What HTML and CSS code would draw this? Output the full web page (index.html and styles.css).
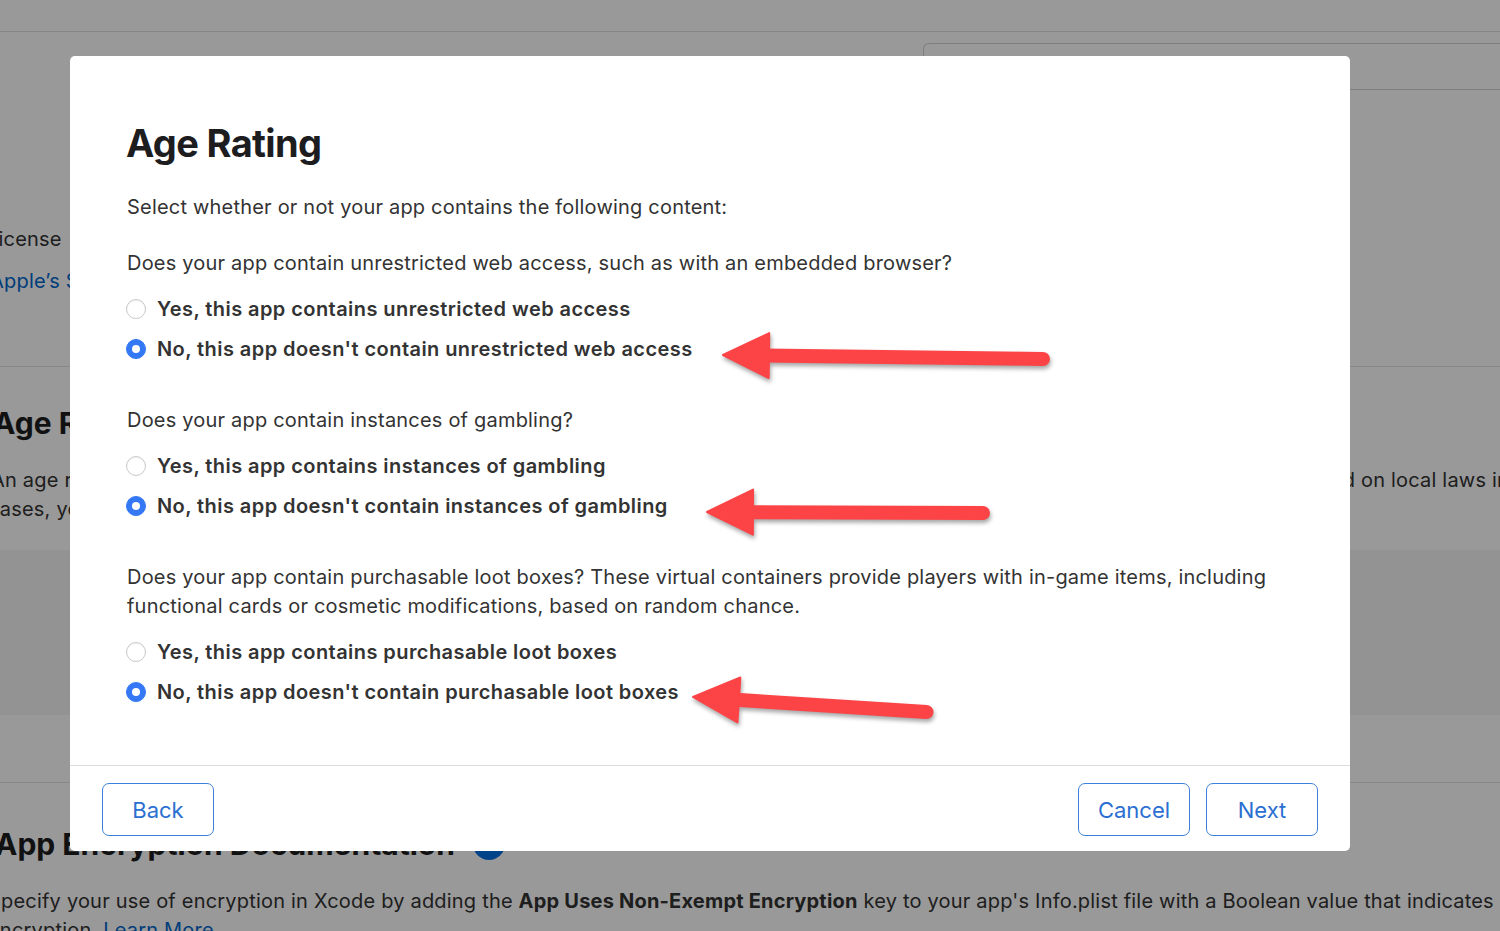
FILE: index.html
```html
<!DOCTYPE html>
<html lang="en">
<head>
<meta charset="utf-8">
<title>Age Rating</title>
<link rel="stylesheet" href="styles.css">
</head>
<body>
<div class="page">
  <div class="topbar"></div>
  <section class="sec sec-license">
    <div class="license-col">
      <div class="bg-text">License</div>
      <div class="bg-link">Apple’s Standard License Agreement</div>
    </div>
    <div class="side-box"></div>
  </section>
  <section class="sec sec-age">
    <h2 class="bg-heading">Age Rating</h2>
    <div class="split-line">
      <span class="cell">An age rating is required for app submission to the App Store. Age ratings for some regions may be assigned</span>
      <span class="cell">based on local laws in each region and territory.</span>
    </div>
    <div class="bg-text shifted">cases, your app may be unavailable in some regions.</div>
  </section>
  <section class="sec sec-band"></section>
  <section class="sec sec-gap"></section>
  <section class="sec sec-enc">
    <h2 class="bg-heading enc-heading">App Encryption Documentation <span class="info-dot"></span></h2>
    <div class="bg-text shifted">Specify your use of encryption in Xcode by adding the <b>App Uses Non-Exempt Encryption</b> key to your app's Info.plist file with a Boolean value that indicates whether your app uses</div>
    <div class="bg-text shifted">encryption. <span class="bg-link-inline">Learn More</span></div>
  </section>
</div>

<div class="overlay">
  <div class="modal">
    <div class="modal-body">
      <h1 class="title">Age Rating</h1>
      <p class="intro">Select whether or not your app contains the following content:</p>

      <div class="group">
        <p class="question">Does your app contain unrestricted web access, such as with an embedded browser?</p>
        <label class="option"><span class="radio"></span><span class="opt-text">Yes, this app contains unrestricted web access</span></label>
        <label class="option"><span class="radio checked"></span><span class="opt-text">No, this app doesn't contain unrestricted web access</span></label>
      </div>

      <div class="group">
        <p class="question">Does your app contain instances of gambling?</p>
        <label class="option"><span class="radio"></span><span class="opt-text">Yes, this app contains instances of gambling</span></label>
        <label class="option"><span class="radio checked"></span><span class="opt-text">No, this app doesn't contain instances of gambling</span></label>
      </div>

      <div class="group last">
        <p class="question">Does your app contain purchasable loot boxes? These virtual containers provide players with in-game items, including functional cards or cosmetic modifications, based on random chance.</p>
        <label class="option"><span class="radio"></span><span class="opt-text">Yes, this app contains purchasable loot boxes</span></label>
        <label class="option"><span class="radio checked"></span><span class="opt-text">No, this app doesn't contain purchasable loot boxes</span></label>
      </div>
    </div>

    <div class="modal-footer">
      <button class="btn">Back</button>
      <div class="footer-right">
        <button class="btn">Cancel</button>
        <button class="btn">Next</button>
      </div>
    </div>

    <svg class="arrows" width="1280" height="795" viewBox="0 0 1280 795" aria-hidden="true">
      <g class="arrow" transform="translate(653 299) rotate(0.7)">
        <line x1="40" y1="0" x2="320" y2="0"/>
        <path d="M0 0 L46 -22.5 L46 22.5 Z"/>
      </g>
      <g class="arrow" transform="translate(637 456) rotate(0.2)">
        <line x1="40" y1="0" x2="276" y2="0"/>
        <path d="M0 0 L46 -22.5 L46 22.5 Z"/>
      </g>
      <g class="arrow" transform="translate(623 641) rotate(3.7)">
        <line x1="40" y1="0" x2="234" y2="0"/>
        <path d="M0 0 L46 -22.5 L46 22.5 Z"/>
      </g>
    </svg>
  </div>
</div>
</body>
</html>
```

FILE: styles.css
```css
* { box-sizing: border-box; }

html, body {
  margin: 0;
  padding: 0;
  width: 1500px;
  height: 931px;
  overflow: hidden;
  background: #ffffff;
  font-family: "Inter", "Noto Sans", "Liberation Sans", sans-serif;
  color: #333333;
}

/* ---------- background page ---------- */
.page {
  width: 1540px;
  margin-left: -9px;
}

.topbar {
  height: 32px;
  border-bottom: 1px solid #e1e1e1;
}

.sec-license {
  height: 335px;
  border-bottom: 1px solid #e1e1e1;
  display: flex;
}

.license-col {
  width: 936px;
  padding-top: 193px;
  margin-left: -4px;
}

.bg-text {
  font-size: 20px;
  line-height: 29px;
  letter-spacing: 0.2px;
  white-space: nowrap;
  color: #333;
}

.bg-text.shifted { margin-left: -3px; }

.bg-link {
  margin-top: 13px;
  margin-left: 3px;
  font-size: 20px;
  line-height: 29px;
  letter-spacing: 0.2px;
  color: #0066cc;
  white-space: nowrap;
}

.bg-link-inline { color: #0066cc; }

.side-box {
  margin-top: 11px;
  height: 47px;
  flex: 1;
  border: 1px solid #d2d2d7;
  border-radius: 6px 0 0 6px;
  border-right: none;
}

.sec-age {
  height: 183px;
  padding-top: 36px;
}

.bg-heading {
  margin: 0 0 23px 2px;
  font-size: 30px;
  line-height: 40px;
  font-weight: 700;
  color: #1d1d1f;
  white-space: nowrap;
  display: flex;
  align-items: center;
  gap: 20px;
}

.split-line {
  display: grid;
  grid-template-columns: 1305px 1fr;
  font-size: 20px;
  line-height: 29px;
  letter-spacing: 0.2px;
  color: #333;
}

.split-line .cell {
  white-space: nowrap;
  overflow: hidden;
}

.sec-band {
  height: 165px;
  background: #f5f5f7;
}

.sec-gap {
  height: 68px;
  border-bottom: 1px solid #e1e1e1;
}

.sec-enc {
  padding-top: 41px;
}

.enc-heading { margin-left: 4px; gap: 18px; }

.info-dot {
  display: inline-block;
  width: 32px;
  height: 32px;
  border-radius: 50%;
  background: #0071e3;
}

/* ---------- overlay & modal ---------- */
.overlay {
  position: fixed;
  inset: 0;
  background: rgba(0, 0, 0, 0.4);
  padding: 56px 0 0 70px;
}

.modal {
  position: relative;
  width: 1280px;
  height: 795px;
  background: #ffffff;
  border-radius: 5px;
  display: flex;
  flex-direction: column;
}

.modal-body {
  flex: 1;
  padding: 64px 57px 0 57px;
}

.title {
  margin: 0 0 27px -1px;
  font-size: 38px;
  line-height: 46px;
  font-weight: 700;
  color: #1d1d1f;
  letter-spacing: -0.65px;
}

.intro,
.question {
  margin: 0;
  font-size: 20px;
  line-height: 29px;
  letter-spacing: 0.2px;
  color: #333333;
}

.intro { margin-bottom: 27px; }

.question { margin-bottom: 11px; }

.group { margin-bottom: 37px; }

.option {
  display: flex;
  align-items: center;
  gap: 11px;
  height: 40px;
  margin-left: -1px;
}

.radio {
  width: 20px;
  height: 20px;
  border-radius: 50%;
  border: 1px solid #c9c9c9;
  background: #ffffff;
  box-shadow: inset 0 1px 1px rgba(0, 0, 0, 0.06);
  flex: none;
  display: flex;
  align-items: center;
  justify-content: center;
}

.radio.checked {
  border-color: #3478f6;
  background: #3478f6;
  box-shadow: none;
}

.radio.checked::after {
  content: "";
  width: 8px;
  height: 8px;
  border-radius: 50%;
  background: #ffffff;
}

.opt-text {
  font-size: 20px;
  font-weight: 600;
  letter-spacing: 0.43px;
  color: #333333;
}

.modal-footer {
  border-top: 1px solid #dcdcdc;
  padding: 17px 32px 15px 32px;
  display: flex;
  justify-content: space-between;
}

.footer-right {
  display: flex;
  gap: 16px;
}

.btn {
  width: 112px;
  height: 53px;
  border: 1.5px solid #3d7fda;
  border-radius: 7px;
  background: #ffffff;
  color: #2a6fd1;
  font-family: "Inter", "Noto Sans", "Liberation Sans", sans-serif;
  font-size: 22px;
  font-weight: 400;
  padding: 0;
}

.arrows {
  position: absolute;
  left: 0;
  top: 0;
  pointer-events: none;
  overflow: visible;
  filter: drop-shadow(1px 3px 2px rgba(0, 0, 0, 0.35));
}

.arrow line {
  stroke: #fc4447;
  stroke-width: 14;
  stroke-linecap: round;
}

.arrow path {
  fill: #fc4447;
  stroke: #fc4447;
  stroke-width: 2;
  stroke-linejoin: round;
}
```
